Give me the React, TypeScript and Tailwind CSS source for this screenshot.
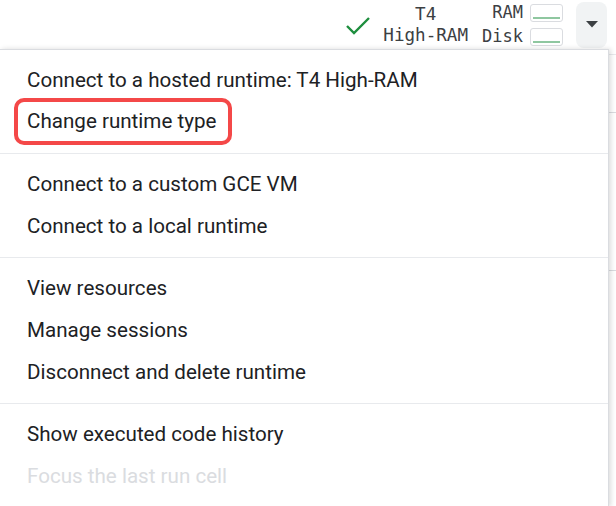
import React from 'react'

// Меню среды выполнения (Colab): верхняя панель с ресурсами и выпадающий список.

type Item = { label: string; disabled?: boolean; highlighted?: boolean }

const groups: Item[][] = [
  [
    { label: 'Connect to a hosted runtime: T4 High-RAM' },
    { label: 'Change runtime type', highlighted: true },
  ],
  [{ label: 'Connect to a custom GCE VM' }, { label: 'Connect to a local runtime' }],
  [{ label: 'View resources' }, { label: 'Manage sessions' }, { label: 'Disconnect and delete runtime' }],
  [{ label: 'Show executed code history' }, { label: 'Focus the last run cell', disabled: true }],
]

function UsageBox() {
  return (
    <div className="w-[33px] h-[18px] rounded-[3px] border border-[#dadce0] bg-white flex flex-col justify-end px-[2px] pb-[2px]">
      <div className="h-[2px] bg-[#8fc7a0]" />
    </div>
  )
}

export default function App() {
  return (
    <div className="w-[616px] h-[506px] bg-white overflow-hidden relative" style={{ fontFamily: 'Roboto, "Liberation Sans", sans-serif' }}>
      {/* Верхняя панель */}
      <div className="h-[49px] flex items-center justify-end pr-[9px]">
        <svg width="26" height="20" viewBox="0 0 26 20" className="mr-[12px] mt-[2px]">
          <path d="M2 10 L9 17 L24 2" fill="none" stroke="#1e8e3e" strokeWidth="2.4" />
        </svg>
        <div
          className="flex flex-col items-center text-[17.6px] leading-[21px] text-[#3c4043]"
          style={{ fontFamily: '"DejaVu Sans Mono", monospace' }}
        >
          <span>T4</span>
          <span>High-RAM</span>
        </div>
        <div
          className="ml-[14px] flex flex-col items-end text-[17px] leading-[21px] text-[#3c4043] gap-[3px]"
          style={{ fontFamily: '"DejaVu Sans Mono", monospace' }}
        >
          <div className="flex items-center gap-[7px]">
            <span>RAM</span>
            <UsageBox />
          </div>
          <div className="flex items-center gap-[7px]">
            <span>Disk</span>
            <UsageBox />
          </div>
        </div>
        <div className="ml-[13px] w-[31px] h-[46px] rounded-[8px] bg-[#f1f3f4] flex items-center justify-center">
          <svg width="12" height="7" viewBox="0 0 12 7">
            <path d="M0 0 L12 0 L6 6.5 Z" fill="#3c4043" />
          </svg>
        </div>
      </div>

      {/* Фон страницы справа от меню */}
      <div className="absolute left-[609px] top-[49px] w-[7px] h-[457px] bg-white">
        <div className="mt-[5px] h-px bg-[#e8eaed]" />
        <div className="mt-[57px] h-px bg-[#dadce0]" />
        <div className="mt-[157px] h-px bg-[#dadce0]" />
      </div>

      {/* Выпадающее меню */}
      <div className="w-[609px] border-t border-r border-[#dadce0] bg-white shadow-[2px_0_5px_rgba(0,0,0,0.14)] relative">
        {groups.map((group, gi) => (
          <div key={gi} className={`pt-[8px] pb-[11px] ${gi > 0 ? 'border-t border-[#e8eaed]' : ''}`}>
            {group.map((item) => (
              <div key={item.label} className="h-[42px] pt-[3px] flex items-center px-[27px]">
                {item.highlighted ? (
                  <span className="-ml-[13px] -mt-[2px] pl-[9px] pr-[12px] py-[7px] leading-[25px] rounded-[10px] border-[4px] border-[#f44848] text-[20.6px] text-[#202124]">
                    {item.label}
                  </span>
                ) : (
                  <span className={`text-[20.6px] ${item.disabled ? 'text-[#dadce0]' : 'text-[#202124]'}`}>
                    {item.label}
                  </span>
                )}
              </div>
            ))}
          </div>
        ))}
      </div>
    </div>
  )
}
